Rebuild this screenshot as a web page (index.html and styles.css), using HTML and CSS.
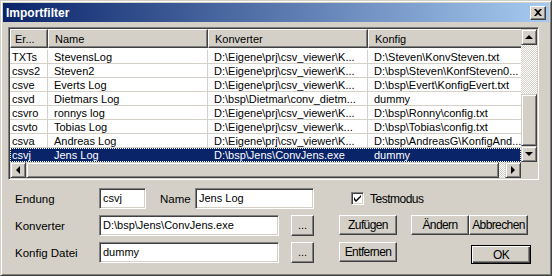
FILE: index.html
```html
<!DOCTYPE html>
<html lang="de">
<head>
  <meta charset="UTF-8" />
  <title>Importfilter</title>
  <link rel="stylesheet" href="styles.css">
</head>
<body>
  <div class="window">
    <div class="titlebar">
      <span class="title">Importfilter</span>
      <span class="close">
        <svg width="8" height="7" viewBox="0 0 8 7"><path d="M0 0h2l2 2 2-2h2L5 3.5 8 7H6L4 5 2 7H0l3-3.5z" fill="#000"/></svg>
      </span>
    </div>

    <div class="list">
      <div class="list-top">
        <div class="grid">
          <div class="header">
            <div class="hcell c1">Er...</div>
            <div class="hcell c2">Name</div>
            <div class="hcell c3">Konverter</div>
            <div class="hcell c4">Konfig</div>
          </div>
          <div id="rows" class="rows"></div>
        </div>
        <div class="vscroll">
          <div class="sbtn"><span class="arrow up"></span></div>
          <div class="track"></div>
          <div class="thumb"></div>
          <div class="sbtn"><span class="arrow down"></span></div>
        </div>
      </div>
      <div class="hscroll">
        <div class="sbtn"><span class="arrow left"></span></div>
        <div class="hthumb"></div>
        <div class="htrack"></div>
        <div class="sbtn"><span class="arrow right"></span></div>
        <div class="corner"></div>
      </div>
    </div>

    <div class="form">
      <div class="fields">
        <div class="row">
          <label class="lbl">Endung</label>
          <div class="input short">csvj</div>
          <label class="lbl name-lbl">Name</label>
          <div class="input name">Jens Log</div>
        </div>
        <div class="row">
          <label class="lbl">Konverter</label>
          <div class="input long">D:\bsp\Jens\ConvJens.exe</div>
          <div class="btn dots">...</div>
        </div>
        <div class="row">
          <label class="lbl">Konfig Datei</label>
          <div class="input long">dummy</div>
          <div class="btn dots">...</div>
        </div>
      </div>
      <div class="actions">
        <div class="arow check-row">
          <span class="checkbox">
            <svg width="7" height="7" viewBox="0 0 7 7"><path d="M0 2v3l2 2 5-5V0L2 5z" fill="#000"/></svg>
          </span>
          <span class="check-text">Testmodus</span>
        </div>
        <div class="arow">
          <div class="btn">Zufügen</div>
          <div class="btn aendern">Ändern</div>
          <div class="btn wide">Abbrechen</div>
        </div>
        <div class="arow">
          <div class="btn">Entfernen</div>
          <div class="btn ok">OK</div>
        </div>
      </div>
    </div>
  </div>

  <script>
    const data = [
      ["TXTs", "StevensLog", "D:\\Eigene\\prj\\csv_viewer\\K...", "D:\\Steven\\KonvSteven.txt"],
      ["csvs2", "Steven2", "D:\\Eigene\\prj\\csv_viewer\\K...", "D:\\bsp\\Steven\\KonfSteven0..."],
      ["csve", "Everts Log", "D:\\Eigene\\prj\\csv_viewer\\K...", "D:\\bsp\\Evert\\KonfigEvert.txt"],
      ["csvd", "Dietmars Log", "D:\\bsp\\Dietmar\\conv_dietm...", "dummy"],
      ["csvro", "ronnys log", "D:\\Eigene\\prj\\csv_viewer\\K...", "D:\\bsp\\Ronny\\config.txt"],
      ["csvto", "Tobias Log", "D:\\Eigene\\prj\\csv_viewer\\k...", "D:\\bsp\\Tobias\\config.txt"],
      ["csva", "Andreas Log", "D:\\Eigene\\prj\\csv_viewer\\K...", "D:\\bsp\\AndreasG\\KonfigAnd..."],
      ["csvj", "Jens Log", "D:\\bsp\\Jens\\ConvJens.exe", "dummy"]
    ];
    const selected = 7;

    const rows = document.getElementById('rows');
    data.forEach((item, i) => {
      const row = document.createElement('div');
      row.className = 'lrow' + (i === selected ? ' selected' : '');
      item.forEach((text, c) => {
        const cell = document.createElement('div');
        cell.className = 'cell c' + (c + 1);
        cell.textContent = text;
        row.appendChild(cell);
      });
      rows.appendChild(row);
    });
  </script>
</body>
</html>
```

FILE: styles.css
```css
body {
  margin: 0;
  font-family: "Liberation Sans", Arial, sans-serif;
  font-size: 11px;
  color: #000;
  background: #d4d0c8;
}
.window {
  width: 552px;
  height: 276px;
  box-sizing: border-box;
  background: #d4d0c8;
  border: 1px solid;
  border-color: #d4d0c8 #404040 #404040 #d4d0c8;
  box-shadow: inset 1px 1px #fff, inset -1px -1px #808080;
  padding: 2px;
  overflow: hidden;
}
.titlebar {
  height: 19px;
  display: flex;
  align-items: center;
  justify-content: space-between;
  padding: 0 3px 0 3px;
  background: linear-gradient(to right, #0a246a, #a6caf0);
}
.title {
  color: #fff;
  font-weight: bold;
  font-size: 12px;
}
.close {
  width: 16px;
  height: 14px;
  box-sizing: border-box;
  display: flex;
  align-items: center;
  justify-content: center;
  background: #d4d0c8;
  border: 1px solid;
  border-color: #fff #404040 #404040 #fff;
  box-shadow: inset -1px -1px #808080;
}

/* list view */
.list {
  margin: 5px 10px 0 5px;
  height: 153px;
  box-sizing: border-box;
  border: 1px solid;
  border-color: #808080 #fff #fff #808080;
  box-shadow: inset 1px 1px #404040, inset -1px -1px #d4d0c8;
  padding: 1px;
  background: #fff;
}
.list-top {
  display: flex;
  height: 133px;
}
.grid {
  width: 511px;
  overflow: hidden;
}
.header {
  display: flex;
  height: 19px;
}
.hcell {
  box-sizing: border-box;
  flex: none;
  padding: 3px 6px 0;
  background: #d4d0c8;
  border: 1px solid;
  border-color: #fff #404040 #404040 #fff;
  box-shadow: inset -1px -1px #808080;
  white-space: nowrap;
  overflow: hidden;
}
.hcell.c1 { padding-left: 4px; padding-right: 0; }
.c1 { width: 38px; }
.c2 { width: 160px; }
.c3 { width: 160px; }
.c4 { width: 160px; }
.rows {
  padding-top: 2px;
}
.lrow {
  display: flex;
  height: 14px;
}
.cell {
  box-sizing: border-box;
  flex: none;
  padding: 1px 6px 0;
  border-right: 1px solid #d4d0c8;
  border-bottom: 1px solid #d4d0c8;
  white-space: nowrap;
  overflow: hidden;
}
.cell.c1 { padding-left: 2px; }
.lrow.selected {
  background: #0a246a;
  color: #fff;
  outline: 1px dotted #fff;
  outline-offset: -1px;
}
.lrow.selected .cell {
  border-color: #0a246a;
}

/* scrollbars */
.vscroll {
  width: 16px;
  display: flex;
  flex-direction: column;
}
.sbtn {
  width: 16px;
  height: 16px;
  flex: none;
  box-sizing: border-box;
  display: flex;
  align-items: center;
  justify-content: center;
  background: #d4d0c8;
  border: 1px solid;
  border-color: #d4d0c8 #404040 #404040 #d4d0c8;
  box-shadow: inset 1px 1px #fff, inset -1px -1px #808080;
}
.track, .htrack {
  flex: 1;
  background: repeating-conic-gradient(#d4d0c8 0 25%, #fff 0 50%) 0 0 / 2px 2px;
}
.thumb {
  height: 52px;
  box-sizing: border-box;
  background: #d4d0c8;
  border: 1px solid;
  border-color: #d4d0c8 #404040 #404040 #d4d0c8;
  box-shadow: inset 1px 1px #fff, inset -1px -1px #808080;
}
.hscroll {
  display: flex;
  height: 16px;
}
.hthumb {
  width: 473px;
  box-sizing: border-box;
  background: #d4d0c8;
  border: 1px solid;
  border-color: #d4d0c8 #404040 #404040 #d4d0c8;
  box-shadow: inset 1px 1px #fff, inset -1px -1px #808080;
}
.corner {
  width: 16px;
  background: #d4d0c8;
}
.arrow {
  width: 0;
  height: 0;
  border: 4px solid transparent;
}
.arrow.up { border-bottom-color: #000; border-top-width: 0; }
.arrow.down { border-top-color: #000; border-bottom-width: 0; }
.arrow.left { border-right-color: #000; border-left-width: 0; }
.arrow.right { border-left-color: #000; border-right-width: 0; }

/* form */
.form {
  display: flex;
  padding: 8px 0 0 12px;
}
.fields {
  width: 299px;
}
.row {
  display: flex;
  align-items: center;
  height: 21px;
  margin-bottom: 6px;
}
.lbl {
  width: 84px;
  flex: none;
  font-size: 11.5px;
}
.name-lbl {
  width: 35px;
  margin-left: 14px;
}
.input {
  height: 21px;
  box-sizing: border-box;
  padding: 3px 3px 0;
  background: #fff;
  border: 1px solid;
  border-color: #808080 #fff #fff #808080;
  box-shadow: inset 1px 1px #404040, inset -1px -1px #d4d0c8;
  white-space: nowrap;
  overflow: hidden;
}
.short { width: 47px; }
.name { width: 119px; }
.long { width: 180px; }
.btn {
  box-sizing: border-box;
  height: 20px;
  width: 58px;
  display: flex;
  align-items: center;
  justify-content: center;
  font-size: 12px;
  letter-spacing: -0.6px;
  background: #d4d0c8;
  border: 1px solid;
  border-color: #fff #404040 #404040 #fff;
  box-shadow: inset -1px -1px #808080;
}
.dots {
  width: 23px;
  height: 21px;
  margin-left: 12px;
  font-size: 11px;
  letter-spacing: 0;
  align-items: flex-end;
  padding-bottom: 4px;
}
.actions {
  margin-left: 25px;
  width: 192px;
}
.arow {
  display: flex;
  height: 21px;
  margin-bottom: 6px;
  align-items: flex-start;
}
.check-row {
  align-items: center;
  padding-left: 12px;
}
.checkbox {
  width: 13px;
  height: 13px;
  box-sizing: border-box;
  display: flex;
  align-items: center;
  justify-content: center;
  background: #fff;
  border: 1px solid;
  border-color: #808080 #fff #fff #808080;
  box-shadow: inset 1px 1px #404040, inset -1px -1px #d4d0c8;
}
.check-text {
  margin-left: 6px;
  font-size: 12px;
  letter-spacing: -0.5px;
}
.aendern {
  margin-left: 14px;
}
.wide {
  width: 59px;
}
.ok {
  margin-left: 74px;
  margin-top: 3px;
  width: 60px;
  height: 19px;
  border-color: #000;
  box-shadow: inset 1px 1px #fff, inset -1px -1px #404040, inset -2px -2px #808080;
}
```
